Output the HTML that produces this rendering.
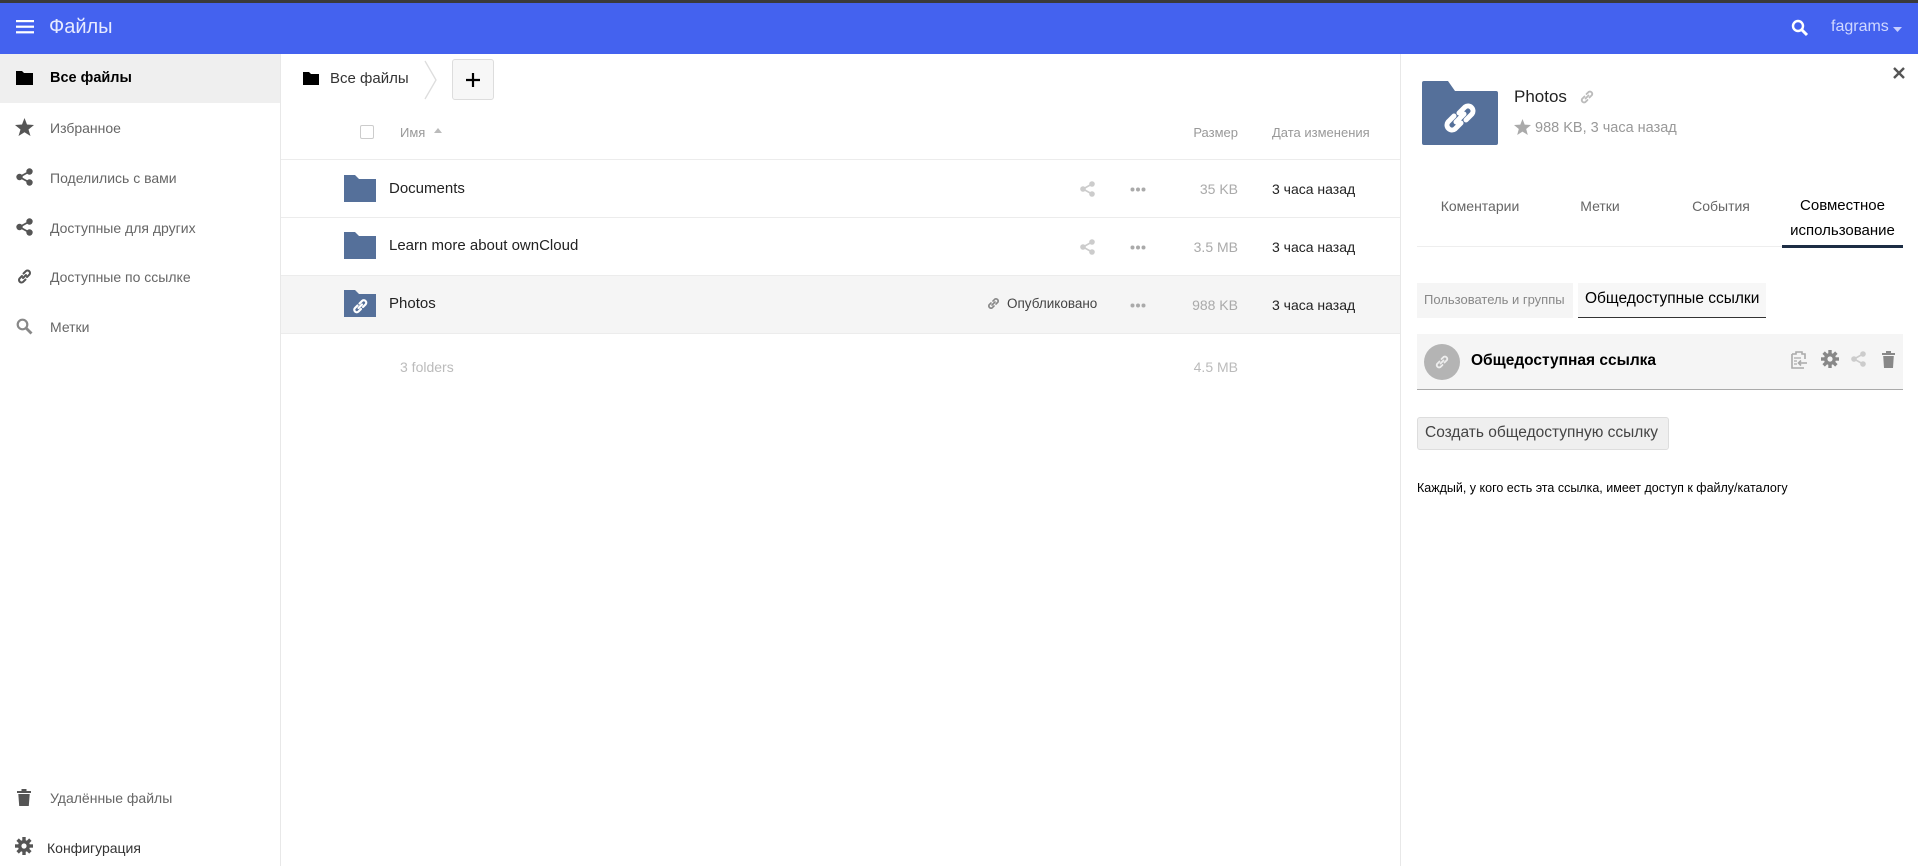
<!DOCTYPE html>
<html><head><meta charset="utf-8"><style>
*{box-sizing:border-box;margin:0;padding:0}
body{width:1918px;height:866px;overflow:hidden;background:#fff;font-family:"Liberation Sans","DejaVu Sans",sans-serif;position:relative;color:#000}
.a{position:absolute;white-space:nowrap}
#top{left:0;top:0;width:1918px;height:4px;background:#3a3a3a}
#hdr{left:0;top:3px;width:1918px;height:51px;background:#4462ef}
#side{left:0;top:54px;width:281px;height:812px;border-right:1px solid #e8e8e8}
.si{left:50px;font-size:14px;color:#666}
.row{left:281px;width:1119px;height:58px;border-bottom:1px solid #ececec}
.nm{left:389px;font-size:15px;color:#222}
.sz{right:680px;font-size:14px;color:#aaa;text-align:right}
.dt{left:1272px;font-size:14px;color:#222}
#panel{left:1400px;top:54px;width:518px;height:812px;border-left:1px solid #e8e8e8}
.tab{font-size:14px;color:#666;text-align:center}
</style></head><body>
<div class="a" id="top"></div>
<div class="a" id="hdr"></div>
<svg class="a" style="left:16px;top:20px" width="18" height="14"><rect y="0" width="18" height="2.2" fill="#fff"/><rect y="5.6" width="18" height="2.2" fill="#fff"/><rect y="11.2" width="18" height="2.2" fill="#fff"/></svg>
<div class="a" style="left:49px;top:16px;font-size:20px;color:#e6eaff">Файлы</div>
<svg class="a" style="left:1791px;top:19px" width="18" height="18"><circle cx="7" cy="7" r="5" stroke="#fff" stroke-width="2.4" fill="none"/><path d="M10.5 10.5L16 16" stroke="#fff" stroke-width="3"/></svg>
<div class="a" style="left:1831px;top:18px;font-size:16px;color:#d0d8ff">fagrams</div>
<svg class="a" style="left:1893px;top:27px" width="10" height="6"><path d="M0 0H9L4.5 5Z" fill="#c8d0ff"/></svg>

<div class="a" id="side"></div>
<div class="a" style="left:0;top:54px;width:280px;height:49px;background:#efefef"></div>
<svg class="a" style="left:16px;top:71px" width="17" height="14"><path d="M0 0H6L8 2H17V14H0Z" fill="#000"/></svg>
<div class="a si" style="top:70px;color:#000;font-weight:bold;font-size:14.5px">Все файлы</div>
<svg class="a" style="left:15px;top:118px" width="19" height="18"><path d="M9.5 0L12 6.5L19 7L13.5 11.5L15.5 18L9.5 14.3L3.5 18L5.5 11.5L0 7L7 6.5Z" fill="#555"/></svg>
<div class="a si" style="top:120px">Избранное</div>
<svg class="a" style="left:16px;top:168px" width="17" height="18"><g fill="#555"><circle cx="13.5" cy="3.5" r="3.2"/><circle cx="3.5" cy="9" r="3.2"/><circle cx="13.5" cy="14.5" r="3.2"/></g><path d="M13.5 3.5L3.5 9L13.5 14.5" stroke="#555" stroke-width="1.8" fill="none"/></svg>
<div class="a si" style="top:170px">Поделились с вами</div>
<svg class="a" style="left:16px;top:218px" width="17" height="18"><g fill="#555"><circle cx="13.5" cy="3.5" r="3.2"/><circle cx="3.5" cy="9" r="3.2"/><circle cx="13.5" cy="14.5" r="3.2"/></g><path d="M13.5 3.5L3.5 9L13.5 14.5" stroke="#555" stroke-width="1.8" fill="none"/></svg>
<div class="a si" style="top:220px">Доступные для других</div>
<svg class="a" style="left:16px;top:268px" width="17" height="17"><path d="M7 10L10 7M6 8L3.5 10.5a2.5 2.5 0 0 0 3.5 3.5L9.5 11.5M11 9L13.5 6.5a2.5 2.5 0 0 0-3.5-3.5L7.5 5.5" stroke="#555" stroke-width="2" fill="none" stroke-linecap="round"/></svg>
<div class="a si" style="top:269px">Доступные по ссылке</div>
<svg class="a" style="left:16px;top:318px" width="17" height="17"><circle cx="6.5" cy="6.5" r="4.8" stroke="#888" stroke-width="2.2" fill="none"/><path d="M10 10L15.5 15.5" stroke="#888" stroke-width="2.8"/></svg>
<div class="a si" style="top:319px">Метки</div>
<svg class="a" style="left:17px;top:789px" width="14" height="17"><path d="M0 2H14V4H0ZM4.5 0H9.5V2H4.5ZM1.3 5H12.7L11.8 17H2.2Z" fill="#555"/></svg>
<div class="a si" style="top:790px">Удалённые файлы</div>
<svg class="a" style="left:15px;top:837px" width="18" height="18" viewBox="0 0 18 18"><g fill="#555"><circle cx="9" cy="9" r="6"/><rect x="7.3" y="0" width="3.4" height="18"/><rect x="0" y="7.3" width="18" height="3.4"/><rect x="7.3" y="0" width="3.4" height="18" transform="rotate(45 9 9)"/><rect x="7.3" y="0" width="3.4" height="18" transform="rotate(-45 9 9)"/></g><circle cx="9" cy="9" r="2.6" fill="#fff"/></svg>
<div class="a si" style="top:840px;left:47px;color:#333">Конфигурация</div>

<svg class="a" style="left:303px;top:72px" width="16" height="13"><path d="M0 0H6L8 2H16V13H0Z" fill="#000"/></svg>
<div class="a" style="left:330px;top:70px;font-size:15px;color:#333">Все файлы</div>
<svg class="a" style="left:424px;top:60px" width="14" height="40"><path d="M1 1L12 20L1 39" stroke="#ddd" stroke-width="1.3" fill="none"/></svg>
<div class="a" style="left:452px;top:59px;width:42px;height:41px;border:1px solid #ddd;border-radius:3px;background:#f7f7f7"></div>
<svg class="a" style="left:465px;top:72px" width="16" height="16"><path d="M8 1V15M1 8H15" stroke="#000" stroke-width="2.2"/></svg>

<div class="a" style="left:281px;top:159px;width:1119px;height:1px;background:#ececec"></div>
<div class="a" style="left:360px;top:125px;width:14px;height:14px;border:1px solid #ccc;border-radius:2px"></div>
<div class="a" style="left:400px;top:125px;font-size:13px;color:#999">Имя</div>
<svg class="a" style="left:434px;top:128px" width="9" height="6"><path d="M0 5H8L4 0Z" fill="#bbb"/></svg>
<div class="a" style="right:680px;top:125px;font-size:13px;color:#999">Размер</div>
<div class="a" style="left:1272px;top:125px;font-size:13px;color:#999">Дата изменения</div>

<div class="a row" style="top:160px"></div>
<div class="a row" style="top:218px"></div>
<div class="a row" style="top:276px;background:#f5f5f5"></div>

<svg class="a" style="left:344px;top:175px" width="32" height="27"><path d="M0 0H11L15 4H32V27H0Z" fill="#55709a"/></svg>
<div class="a nm" style="top:180px">Documents</div>
<svg class="a" style="left:344px;top:232px" width="32" height="27"><path d="M0 0H11L15 4H32V27H0Z" fill="#55709a"/></svg>
<div class="a nm" style="top:237px">Learn more about ownCloud</div>
<svg class="a" style="left:344px;top:290px" width="32" height="27"><path d="M0 0H11L15 4H32V27H0Z" fill="#55709a"/><path d="M14.5 18L18 14.5M13.5 15.5L11 18a2.4 2.4 0 0 0 3.5 3.5L17 19M19 17L21.5 14.5a2.4 2.4 0 0 0-3.5-3.5L15.5 13.5" stroke="#fff" stroke-width="2.2" fill="none" stroke-linecap="round"/></svg>
<div class="a nm" style="top:295px">Photos</div>

<svg class="a" style="left:1080px;top:181px" width="15" height="16"><g fill="#ccc"><circle cx="12" cy="3" r="2.8"/><circle cx="3" cy="8" r="2.8"/><circle cx="12" cy="13" r="2.8"/></g><path d="M12 3L3 8L12 13" stroke="#ccc" stroke-width="1.6" fill="none"/></svg>
<svg class="a" style="left:1080px;top:239px" width="15" height="16"><g fill="#ccc"><circle cx="12" cy="3" r="2.8"/><circle cx="3" cy="8" r="2.8"/><circle cx="12" cy="13" r="2.8"/></g><path d="M12 3L3 8L12 13" stroke="#ccc" stroke-width="1.6" fill="none"/></svg>
<svg class="a" style="left:986px;top:296px" width="15" height="15"><path d="M6 9L9 6M5 7L3 9a2.3 2.3 0 0 0 3 3L8 10M10 8L12 6a2.3 2.3 0 0 0-3-3L7 5" stroke="#888" stroke-width="1.6" fill="none" stroke-linecap="round"/></svg>
<div class="a" style="left:1007px;top:296px;font-size:13.5px;color:#444">Опубликовано</div>
<svg class="a" style="left:1130px;top:187px" width="16" height="5"><g fill="#aaa"><circle cx="2.5" cy="2.5" r="2"/><circle cx="8" cy="2.5" r="2"/><circle cx="13.5" cy="2.5" r="2"/></g></svg>
<svg class="a" style="left:1130px;top:245px" width="16" height="5"><g fill="#aaa"><circle cx="2.5" cy="2.5" r="2"/><circle cx="8" cy="2.5" r="2"/><circle cx="13.5" cy="2.5" r="2"/></g></svg>
<svg class="a" style="left:1130px;top:303px" width="16" height="5"><g fill="#aaa"><circle cx="2.5" cy="2.5" r="2"/><circle cx="8" cy="2.5" r="2"/><circle cx="13.5" cy="2.5" r="2"/></g></svg>

<div class="a sz" style="top:181px">35 KB</div>
<div class="a sz" style="top:239px">3.5 MB</div>
<div class="a sz" style="top:297px">988 KB</div>
<div class="a dt" style="top:181px">3 часа назад</div>
<div class="a dt" style="top:239px">3 часа назад</div>
<div class="a dt" style="top:297px">3 часа назад</div>
<div class="a" style="left:400px;top:359px;font-size:14px;color:#bbb">3 folders</div>
<div class="a sz" style="top:359px;color:#bbb">4.5 MB</div>

<div class="a" id="panel"></div>
<svg class="a" style="left:1893px;top:67px" width="12" height="12"><path d="M1 1L11 11M11 1L1 11" stroke="#555" stroke-width="2.4"/></svg>
<svg class="a" style="left:1422px;top:81px" width="76" height="64"><path d="M2 0H26L33 10H74a2 2 0 0 1 2 2V62a2 2 0 0 1-2 2H2a2 2 0 0 1-2-2V2a2 2 0 0 1 2-2Z" fill="#55709a"/><path d="M34 41L42 33M32 35L26 41a5 5 0 0 0 7 7L39 42M44 39L50 33a5 5 0 0 0-7-7L37 32" stroke="#fff" stroke-width="5" fill="none" stroke-linecap="round"/></svg>
<div class="a" style="left:1514px;top:87px;font-size:17px;color:#222">Photos</div>
<svg class="a" style="left:1579px;top:89px" width="16" height="16"><path d="M6.5 9.5L9.5 6.5M5.5 7.5L3 10a2.4 2.4 0 0 0 3.2 3.2L8.5 11M10.5 8.5L13 6a2.4 2.4 0 0 0-3.2-3.2L7.5 5" stroke="#bbb" stroke-width="1.8" fill="none" stroke-linecap="round"/></svg>
<svg class="a" style="left:1514px;top:119px" width="17" height="16"><path d="M8.5 0L10.7 5.6L17 6L12.2 10L13.8 16L8.5 12.6L3.2 16L4.8 10L0 6L6.3 5.6Z" fill="#aaa"/></svg>
<div class="a" style="left:1535px;top:120px;font-size:14.5px;color:#999">988 KB, 3 часа назад</div>

<div class="a tab" style="left:1420px;top:198px;width:120px">Коментарии</div>
<div class="a tab" style="left:1560px;top:198px;width:80px">Метки</div>
<div class="a tab" style="left:1680px;top:198px;width:82px">События</div>
<div class="a tab" style="left:1782px;top:193px;width:121px;color:#000;font-size:15px;line-height:25px;white-space:normal">Совместное использование</div>
<div class="a" style="left:1417px;top:246px;width:486px;height:1px;background:#eee"></div>
<div class="a" style="left:1782px;top:245px;width:121px;height:3px;background:#1d2d44"></div>

<div class="a" style="left:1417px;top:283px;width:156px;height:35px;background:#f5f5f5"></div>
<div class="a" style="left:1424px;top:292px;font-size:13px;color:#888">Пользователь и группы</div>
<div class="a" style="left:1578px;top:283px;width:188px;height:35px;background:#f7f7f7;border-bottom:1.5px solid #333"></div>
<div class="a" style="left:1585px;top:290px;font-size:15.5px;color:#000">Общедоступные ссылки</div>

<div class="a" style="left:1417px;top:334px;width:486px;height:56px;background:#f5f5f5;border-bottom:1.5px solid #aaa"></div>
<div class="a" style="left:1424px;top:344px;width:36px;height:36px;border-radius:50%;background:#b4b4b4"></div>
<svg class="a" style="left:1434px;top:354px" width="16" height="16"><path d="M6.5 9.5L9.5 6.5M5.5 7.5L3 10a2.4 2.4 0 0 0 3.2 3.2L8.5 11M10.5 8.5L13 6a2.4 2.4 0 0 0-3.2-3.2L7.5 5" stroke="#eee" stroke-width="1.8" fill="none" stroke-linecap="round"/></svg>
<div class="a" style="left:1471px;top:352px;font-size:15.5px;color:#000;font-weight:bold">Общедоступная ссылка</div>
<svg class="a" style="left:1791px;top:351px" width="17" height="18"><path d="M1 3H5V1H11V3H14V8M13 17H1V3" stroke="#aaa" stroke-width="1.6" fill="none"/><path d="M8 12H16M10 9.5L7.5 12L10 14.5" stroke="#aaa" stroke-width="1.6" fill="none"/><path d="M3 7H10M3 10H6M3 13H6" stroke="#aaa" stroke-width="1.3"/></svg>
<svg class="a" style="left:1821px;top:350px" width="18" height="18"><g fill="#888"><circle cx="9" cy="9" r="6"/><rect x="7.3" y="0" width="3.4" height="18"/><rect x="0" y="7.3" width="18" height="3.4"/><rect x="7.3" y="0" width="3.4" height="18" transform="rotate(45 9 9)"/><rect x="7.3" y="0" width="3.4" height="18" transform="rotate(-45 9 9)"/></g><circle cx="9" cy="9" r="2.6" fill="#f5f5f5"/></svg>
<svg class="a" style="left:1851px;top:351px" width="15" height="16"><g fill="#ccc"><circle cx="12" cy="3" r="2.8"/><circle cx="3" cy="8" r="2.8"/><circle cx="12" cy="13" r="2.8"/></g><path d="M12 3L3 8L12 13" stroke="#ccc" stroke-width="1.6" fill="none"/></svg>
<svg class="a" style="left:1882px;top:351px" width="13" height="17"><path d="M0 2H13V4H0ZM4 0H9V2H4ZM1.2 5H11.8L11 17H2Z" fill="#888"/></svg>

<div class="a" style="left:1417px;top:417px;width:252px;height:33px;background:#efefef;border:1px solid #ddd;border-radius:3px"></div>
<div class="a" style="left:1425px;top:424px;font-size:15.5px;color:#444">Создать общедоступную ссылку</div>
<div class="a" style="left:1417px;top:481px;font-size:12.5px;color:#000">Каждый, у кого есть эта ссылка, имеет доступ к файлу/каталогу</div>
</body></html>
